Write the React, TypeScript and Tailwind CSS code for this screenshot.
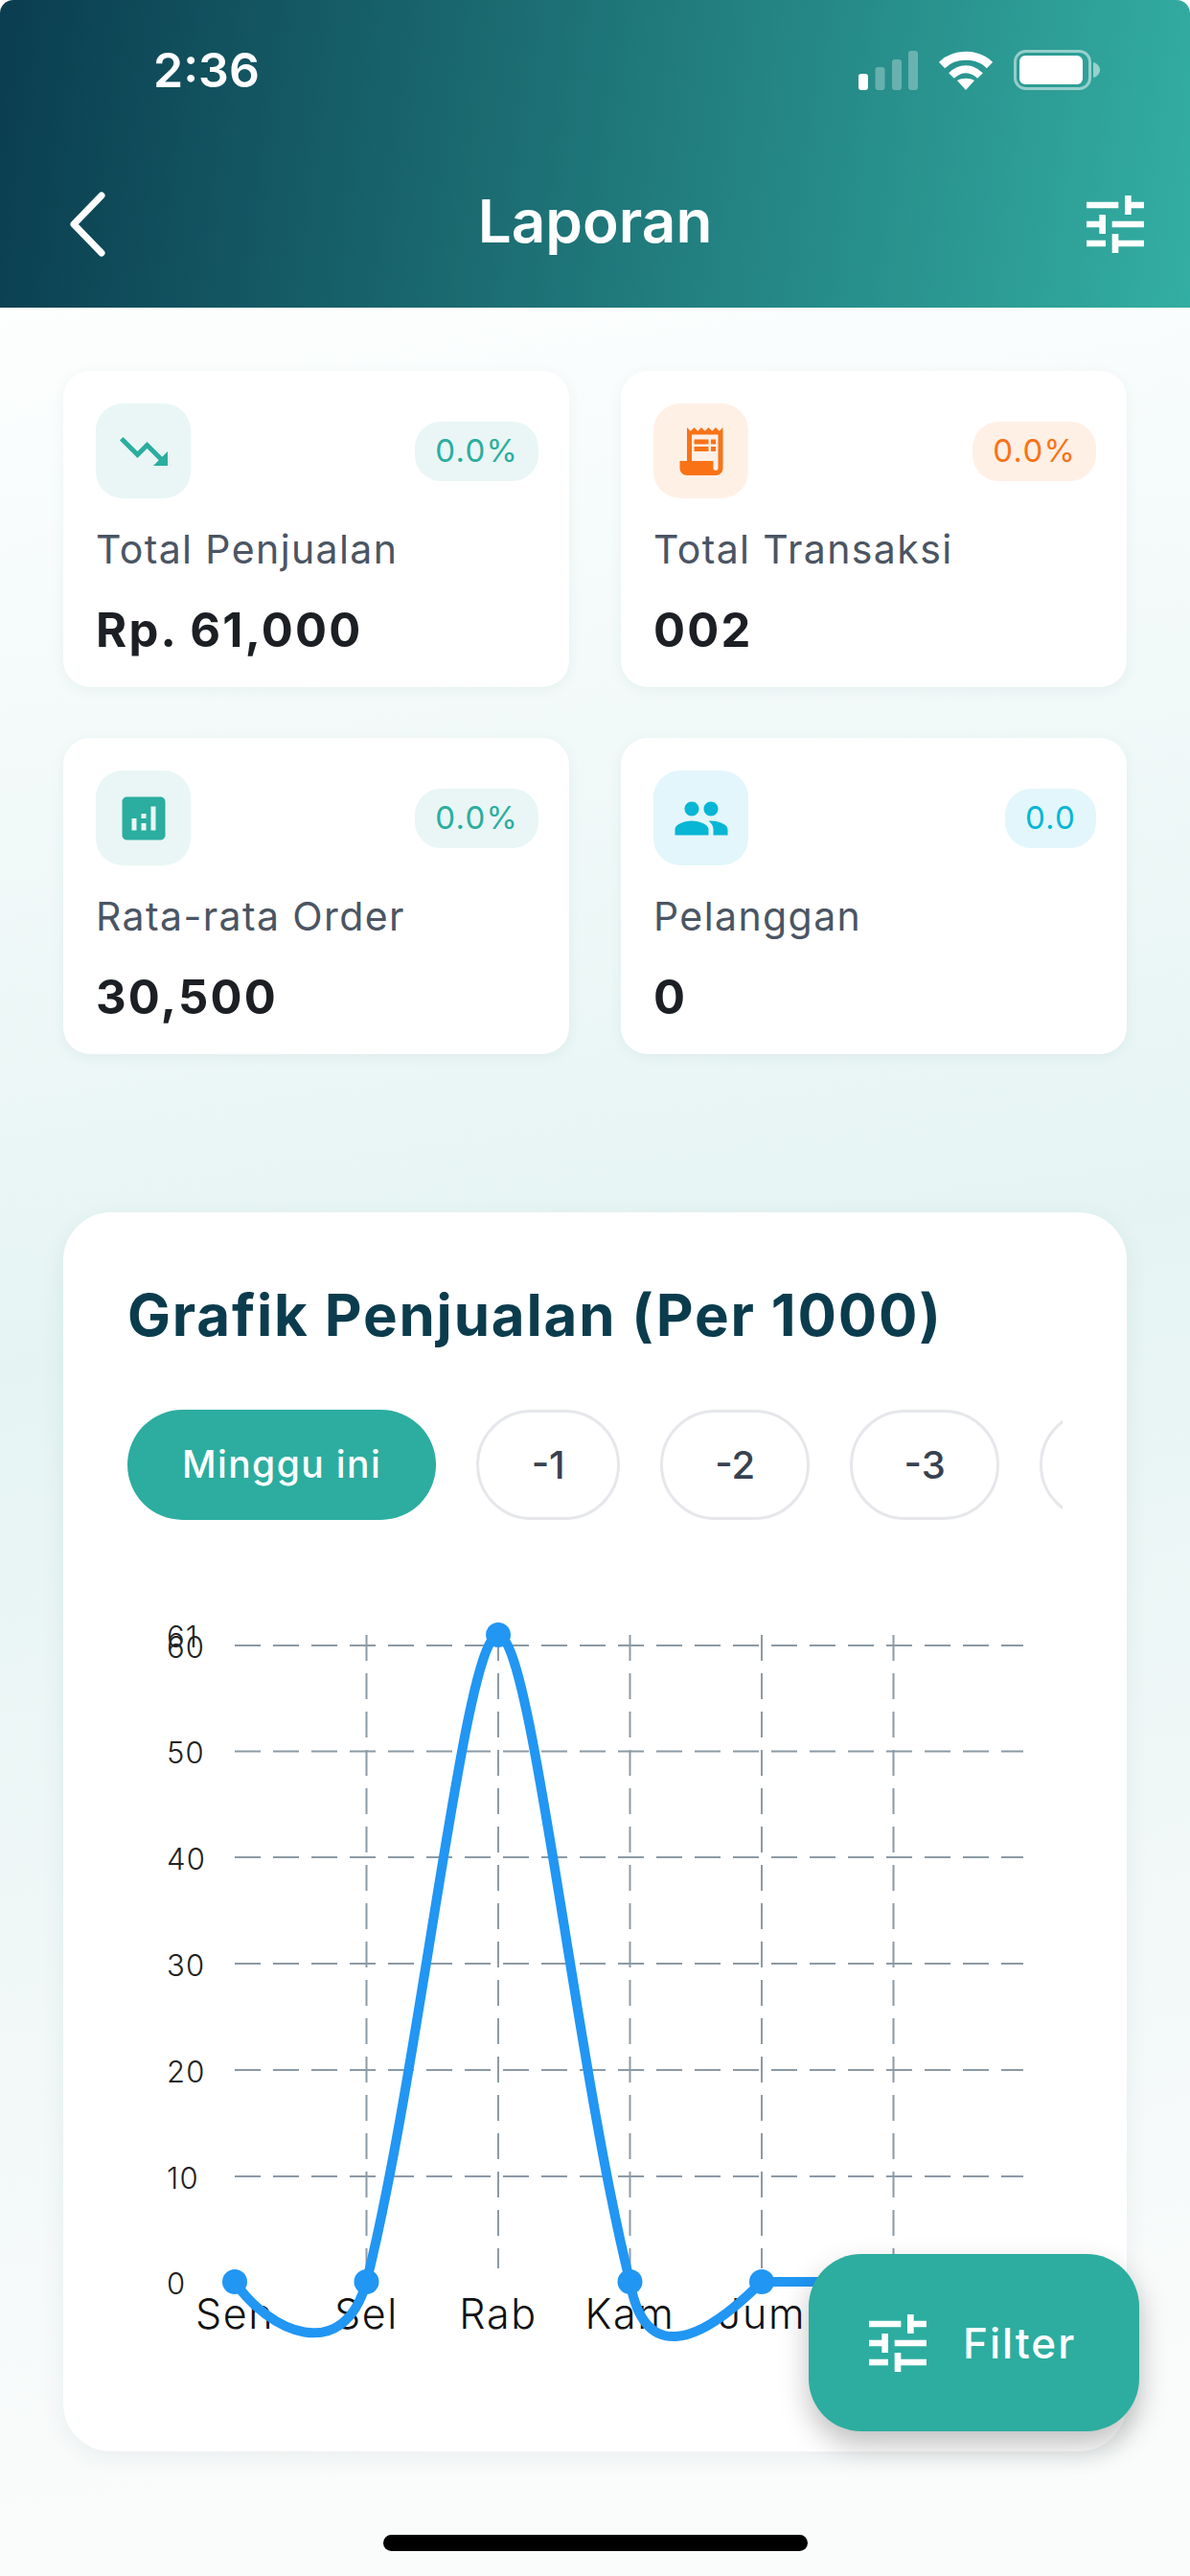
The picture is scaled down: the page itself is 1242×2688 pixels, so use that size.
const TUNE =
  'M3 17v2h6v-2H3zM3 5v2h10V5H3zm10 16v-2h8v-2h-8v-2h-2v6h2zM7 9v2H3v2h4v2h2V9H7zm14 4v-2H11v2h10zm-6-4h2V7h4V5h-4V3h-2v6z';

function MaterialIcon({ d, className }: { d: string; className: string }) {
  return (
    <svg viewBox="0 0 24 24" className={className} fill="currentColor">
      <path d={d} />
    </svg>
  );
}

const stats = [
  {
    label: 'Total Penjualan',
    value: 'Rp. 61,000',
    badge: '0.0%',
    box: 'bg-[#e9f6f5] text-[#2bad9f]',
    icon: 'M16 18l2.29-2.29-4.88-4.88-4 4L2 7.41 3.41 6l6 6 4-4 6.3 6.29L22 12v6z',
  },
  {
    label: 'Total Transaksi',
    value: '002',
    badge: '0.0%',
    box: 'bg-[#fff0e6] text-[#f97316]',
    icon: 'M19.5 3.5 18 2l-1.5 1.5L15 2l-1.5 1.5L12 2l-1.5 1.5L9 2 7.5 3.5 6 2v14H3v3c0 1.66 1.34 3 3 3h12c1.66 0 3-1.34 3-3V2l-1.5 1.5zM19 19c0 .55-.45 1-1 1s-1-.45-1-1v-3H8V5h11v14zM9 7h6v2H9zm7 0h2v2h-2zm-7 3h6v2H9zm7 0h2v2h-2z',
  },
  {
    label: 'Rata-rata Order',
    value: '30,500',
    badge: '0.0%',
    box: 'bg-[#e9f6f5] text-[#2bad9f]',
    icon: 'M19 3H5c-1.1 0-2 .9-2 2v14c0 1.1.9 2 2 2h14c1.1 0 2-.9 2-2V5c0-1.1-.9-2-2-2zM9 17H7v-5h2v5zm4 0h-2v-3h2v3zm0-5h-2v-2h2v2zm4 5h-2V7h2v10z',
  },
  {
    label: 'Pelanggan',
    value: '0',
    badge: '0.0',
    box: 'bg-[#e3f6fb] text-[#06b6d4]',
    icon: 'M16 11c1.66 0 2.99-1.34 2.99-3S17.66 5 16 5c-1.66 0-3 1.34-3 3s1.34 3 3 3zm-8 0c1.66 0 2.99-1.34 2.99-3S9.66 5 8 5C6.34 5 5 6.34 5 8s1.34 3 3 3zm0 2c-2.33 0-7 1.17-7 3.5V19h14v-2.5c0-2.33-4.67-3.5-7-3.5zm8 0c-.29 0-.62.02-.97.05 1.16.84 1.97 1.97 1.97 3.45V19h6v-2.5c0-2.33-4.67-3.5-7-3.5z',
  },
];

function StatusIcons() {
  return (
    <div className="flex items-center gap-[22px] text-white">
      <svg width="62" height="41" viewBox="0 0 62 41" fill="currentColor">
        <rect x="0" y="24" width="10" height="17" rx="3" />
        <rect x="17.5" y="17" width="10" height="24" rx="3" opacity="0.3" />
        <rect x="35" y="9" width="10" height="32" rx="3" opacity="0.3" />
        <rect x="52" y="0" width="10" height="41" rx="3" opacity="0.3" />
      </svg>
      <svg width="56" height="41" viewBox="0 0 56 41" fill="none" stroke="currentColor">
        <path d="M3 15C16 2 40 2 53 15" strokeWidth="9" />
        <path d="M13 26C22 17 34 17 43 26" strokeWidth="8" />
        <path d="M28 41L19 31C24 28 32 28 37 31Z" fill="currentColor" stroke="none" />
      </svg>
      <svg width="90" height="42" viewBox="0 0 90 42" fill="none">
        <rect x="1.5" y="1.5" width="78" height="39" rx="11" stroke="currentColor" strokeWidth="3" opacity="0.5" />
        <rect x="6" y="6" width="66" height="30" rx="6" fill="currentColor" />
        <path d="M83 13c4 1 7 4 7 8s-3 7-7 8z" fill="currentColor" opacity="0.5" />
      </svg>
    </div>
  );
}

function StatCard({ stat }: { stat: (typeof stats)[number] }) {
  return (
    <div className="rounded-[28px] bg-white pt-[34px] pr-[32px] pb-[29px] pl-[34px] shadow-[0_3px_14px_rgba(30,80,80,0.06)]">
      <div className="flex items-center justify-between">
        <div className={`flex h-[99px] w-[99px] items-center justify-center rounded-[28px] ${stat.box}`}>
          <MaterialIcon d={stat.icon} className="h-[60px] w-[60px]" />
        </div>
        <div className={`flex h-[62px] items-center rounded-[27px] px-[21px] text-[33px] tracking-[1.2px] ${stat.box}`}>
          {stat.badge}
        </div>
      </div>
      <div className="mt-[29px] h-[48px] text-[41px] leading-[48px] tracking-[1.4px] text-[#4b5563]">{stat.label}</div>
      <div className="mt-[31px] h-[60px] text-[49px] font-bold leading-[60px] tracking-[2.2px] text-[#1c1f24]">{stat.value}</div>
    </div>
  );
}

const dayX = [245, 382.5, 520, 657.5, 795, 932.5, 1070];
const days = ['Sen', 'Sel', 'Rab', 'Kam', 'Jum', 'Sab', 'Min'];
const yTicks = [
  { label: '60', y: 1716 },
  { label: '50', y: 1826.5 },
  { label: '40', y: 1937 },
  { label: '30', y: 2048 },
  { label: '20', y: 2159 },
  { label: '10', y: 2270 },
];
const CURVE =
  'M245 2380C280 2432 358 2468 382.5 2380C440 2150 485 1705 520 1705C555 1705 600 2150 657.5 2380C672 2462 725 2450 795 2380L1070 2380';

function SalesChart() {
  return (
    <svg width="976" height="830" viewBox="133 1660 976 830" className="mt-[75px] block">
      {yTicks.map((t) => (
        <line key={t.label} x1="245" x2="1068" y1={t.y} y2={t.y} stroke="#8c9aa5" strokeWidth="2" strokeDasharray="27 13" />
      ))}
      {dayX.slice(1, 6).map((x) => (
        <line key={x} x1={x} x2={x} y1="1705" y2="2366" stroke="#8c9aa5" strokeWidth="2" strokeDasharray="27 13" />
      ))}
      <g className="text-[31px] font-light tracking-[1.2px]" fill="#222222">
        <text x="174" y="1717.5">61</text>
        {yTicks.map((t) => (
          <text key={t.label} x="174" y={t.y + 12.5}>
            {t.label}
          </text>
        ))}
        <text x="174" y="2393">0</text>
      </g>
      <g className="text-[43px] font-light tracking-[1.6px]" fill="#111111" textAnchor="middle">
        {days.map((d, i) => (
          <text key={d} x={dayX[i]} y="2429">
            {d}
          </text>
        ))}
      </g>
      <path d={CURVE} fill="none" stroke="#2196f3" strokeWidth="10" />
      {dayX.map((x, i) => (
        <circle key={x} cx={x} cy={i === 2 ? 1705 : 2380} r="13" fill="#2196f3" />
      ))}
    </svg>
  );
}

export default function App() {
  return (
    <div className="relative h-[2688px] w-[1242px] overflow-hidden bg-[linear-gradient(172deg,#ffffff_8%,#e5f4f3_50%,#fafbfb_92%)] font-[Inter,sans-serif]">
      <header className="h-[321px] rounded-t-[14px] bg-[linear-gradient(98deg,#0a3d4f_0%,#33aea2_100%)] text-white">
        <div className="flex h-[146px] items-center justify-between pr-[94px] pl-[160px]">
          <span className="text-[50px] font-semibold">2:36</span>
          <StatusIcons />
        </div>
        <div className="grid h-[169px] grid-cols-[1fr_auto_1fr] items-center px-[38px]">
          <svg width="44" height="68" viewBox="0 0 44 68" fill="none" stroke="currentColor" strokeWidth="7" strokeLinecap="round" strokeLinejoin="round" className="ml-[32px] mt-[6px]">
            <path d="M36 4L7 34L36 64" />
          </svg>
          <h1 className="text-[62px] font-semibold">Laporan</h1>
          <MaterialIcon d={TUNE} className="mt-[6px] h-[80px] w-[80px] justify-self-end" />
        </div>
      </header>

      <main className="px-[66px] pt-[66px]">
        <div className="grid grid-cols-2 gap-x-[54px] gap-y-[53px]">
          {stats.map((s) => (
            <StatCard key={s.label} stat={s} />
          ))}
        </div>

        <section className="mt-[165px] rounded-[50px] bg-white px-[67px] pt-[71px] pb-[67px] shadow-[0_6px_24px_rgba(30,80,80,0.07)]">
          <h2 className="h-[72px] text-[60px] font-bold leading-[72px] tracking-[1.8px] text-[#0b3c4d]">Grafik Penjualan (Per 1000)</h2>
          <div className="mt-[63px] flex gap-[42px] overflow-hidden">
            <button className="h-[115px] shrink-0 rounded-full bg-[#2cad9f] px-[57px] text-[39px] font-medium tracking-[1.4px] text-white">
              Minggu ini
            </button>
            <button className="h-[115px] w-[150px] shrink-0 rounded-full border-[3px] border-[#e5e7eb] text-[40px] font-medium text-[#374151]">
              -1
            </button>
            {['-2', '-3', '-4'].map((p) => (
              <button key={p} className="h-[115px] w-[156px] shrink-0 rounded-full border-[3px] border-[#e5e7eb] text-[40px] font-medium text-[#374151]">
                {p}
              </button>
            ))}
          </div>
          <SalesChart />
        </section>
      </main>

      <button className="absolute top-[2352px] left-[844px] flex h-[185px] w-[345px] items-center gap-[30px] rounded-[55px] bg-[#2cad9f] pl-[63px] text-[44px] font-medium tracking-[2px] text-white shadow-[0_14px_30px_rgba(0,0,0,0.25)]">
        <MaterialIcon d={TUNE} className="h-[80px] w-[80px] -mx-[10px]" />
        <span className="ml-[8px]">Filter</span>
      </button>

      <div className="absolute top-[2645px] left-[400px] h-[17px] w-[443px] rounded-full bg-black" />
    </div>
  );
}
